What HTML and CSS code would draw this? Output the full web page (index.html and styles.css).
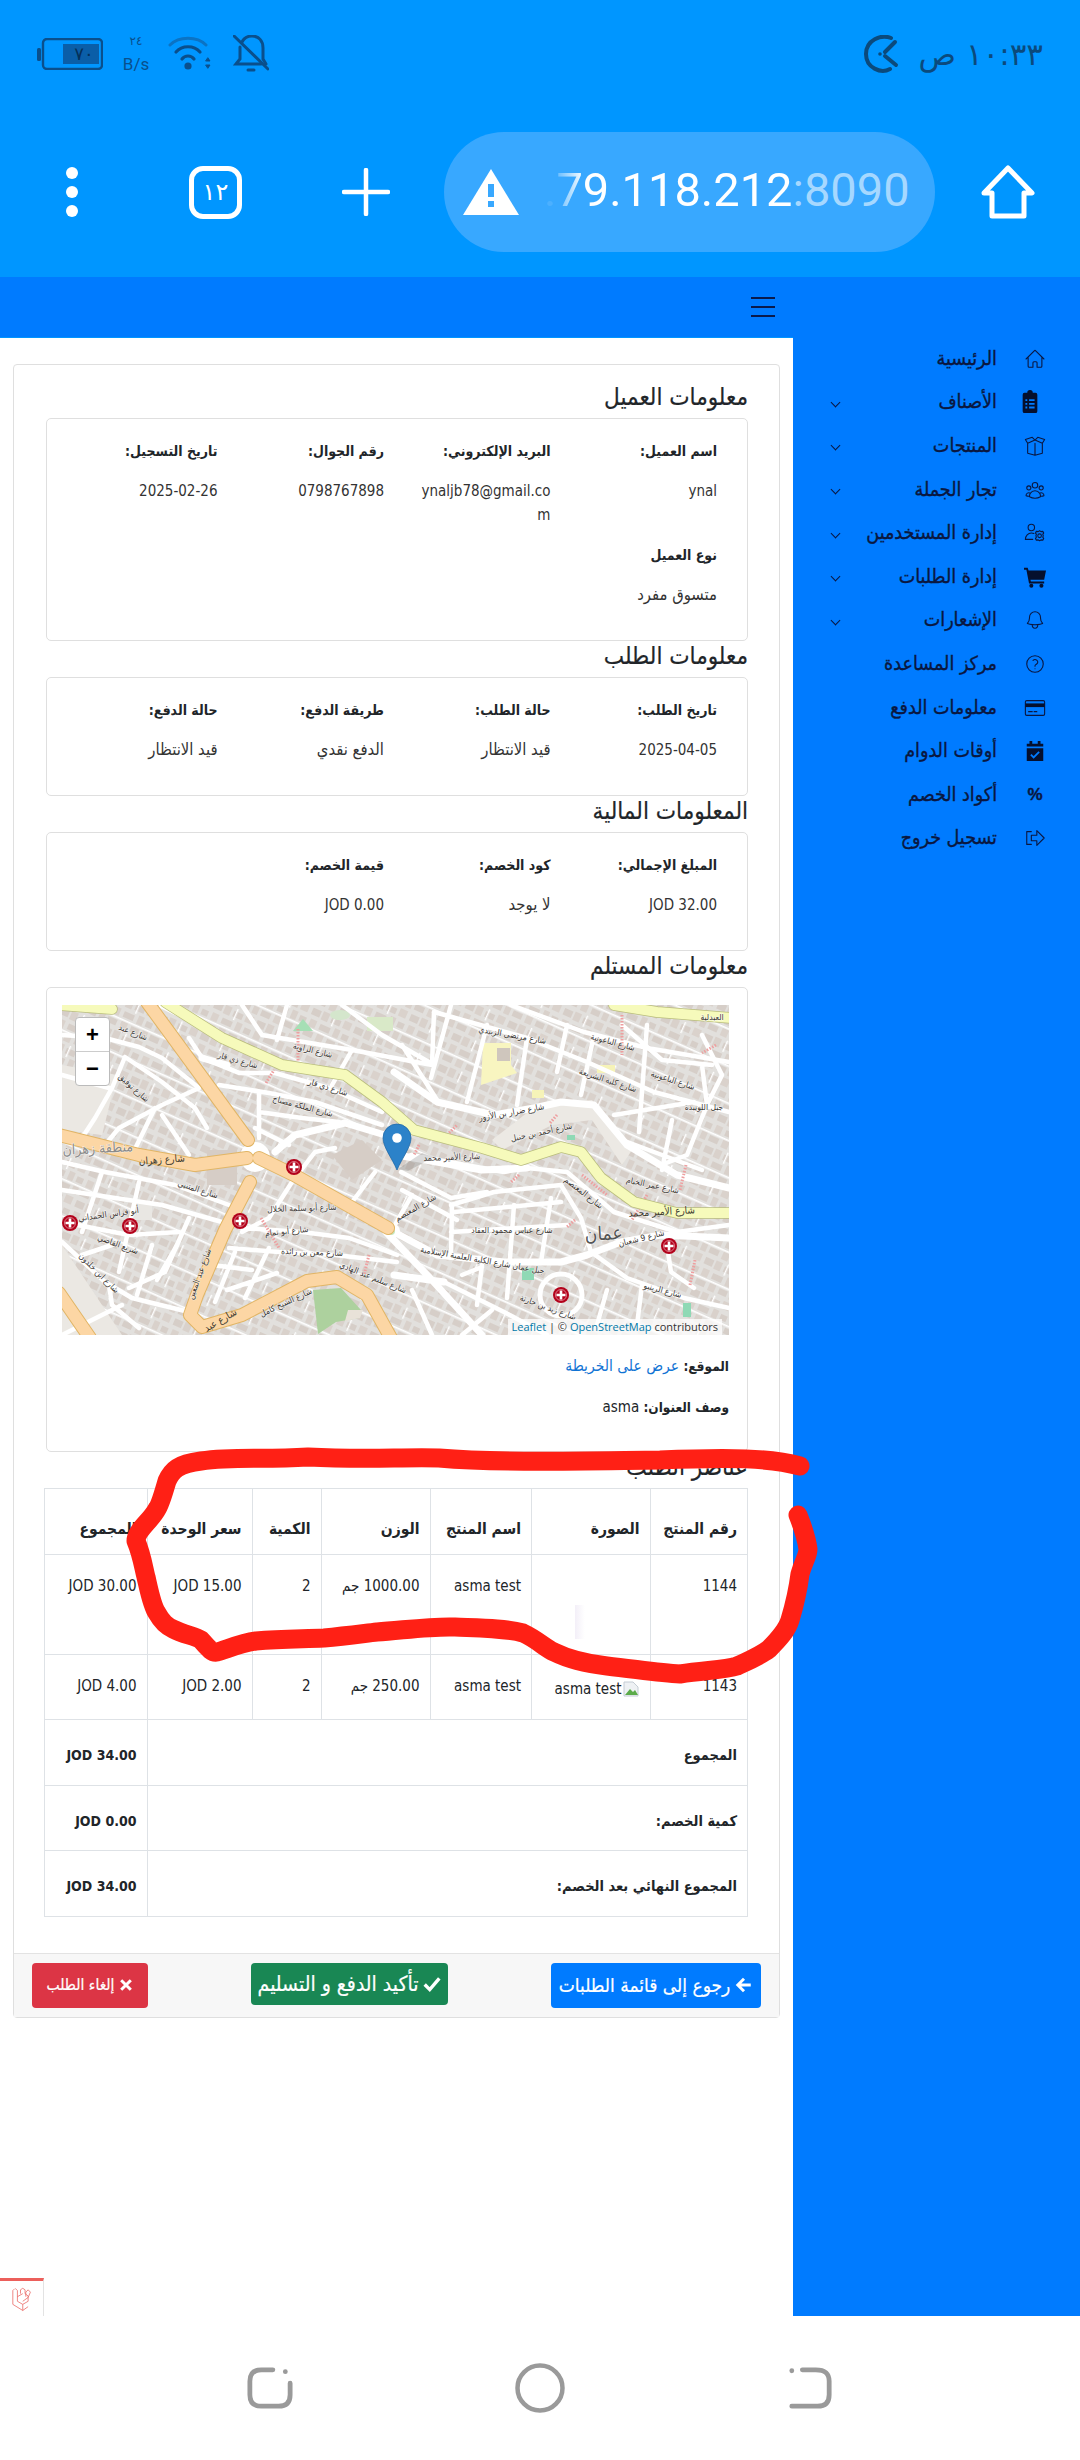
FILE: index.html
```html
<!DOCTYPE html>
<html lang="ar">
<head>
<meta charset="utf-8">
<title>تفاصيل الطلب</title>
<link rel="stylesheet" href="styles.css">
</head>
<body>
<div class="phone">
  <header class="chrome">
    <div class="status">
      <div class="status-left">
        <svg class="ic-battery" viewBox="0 0 66 32"><rect x="0" y="10" width="4" height="13" rx="1.5" fill="#0a4f8c"/><rect x="6" y="1" width="59" height="30" rx="4" fill="none" stroke="#0a4f8c" stroke-width="2.4"/><rect x="26" y="6" width="36" height="20" fill="#0a5ea8"/></svg>
        <span class="batt-num">٧٠</span>
        <div class="speed"><span class="speed-num">٢٤</span><span class="speed-unit">B/s</span></div>
        <svg class="ic-wifi" viewBox="0 0 44 38" fill="none" stroke-linecap="round"><path d="M2 10C11 1 29 1 38 10" stroke="#0b73c4" stroke-width="3"/><path d="M8 17C14 10 26 10 32 17" stroke="#0a4f8c" stroke-width="3.2"/><path d="M14 24C17 20 23 20 26 24" stroke="#0a4f8c" stroke-width="3.2"/><circle cx="20" cy="31" r="3.6" fill="#0a4f8c"/><path d="M40 23l2 3h-4zM40 33l2-3h-4z" fill="#0a4f8c" stroke="#0a4f8c"/></svg>
        <svg class="ic-mute" viewBox="0 0 36 38" fill="none" stroke="#0a4f8c" stroke-width="3" stroke-linecap="round"><path d="M9 7C11 3 15 1 19 1c7 0 11 5 11 12v11l3 5M7 12v12l-4 5h25"/><path d="M1 1l34 33"/><path d="M15 35h6"/></svg>
      </div>
      <div class="status-right">
        <svg class="ic-clock" viewBox="0 0 36 38" fill="none" stroke="#0b4a7c" stroke-width="4" stroke-linecap="round"><path d="M28 3C18-1 3 5 3 19s15 20 24 15"/><path d="M32 7L22 17M22 21l11 9"/><circle cx="17" cy="19" r="1.8" fill="#0b4a7c" stroke="none"/></svg>
        <span class="clock-text" dir="rtl">١٠:٣٣ ص</span>
      </div>
    </div>
    <div class="toolbar">
      <div class="dots"><i></i><i></i><i></i></div>
      <div class="tabs">١٢</div>
      <svg class="ic-plus" viewBox="0 0 48 48" stroke="#fff" stroke-width="4.5" stroke-linecap="round"><path d="M24 2v44M2 24h44"/></svg>
      <div class="pill">
        <svg class="ic-warn" viewBox="0 0 56 46"><path d="M28 0L56 46H0z" fill="#fff"/><rect x="25" y="15" width="6" height="13" fill="#38a8ff"/><rect x="25" y="32" width="6" height="6" fill="#38a8ff"/></svg>
        <span class="url"><span class="url-host">.79.118.212</span><span class="url-port">:8090</span></span>
      </div>
      <svg class="ic-home" viewBox="0 0 54 54" fill="none" stroke="#fff" stroke-width="5" stroke-linejoin="round"><path d="M27 3L51 28H43V51H11V28H3z"/></svg>
    </div>
  </header>

  <nav class="navbar"><div class="burger"><i></i><i></i><i></i></div></nav>

  <main class="main" dir="rtl">
    <aside class="sidebar">
      <ul class="menu">
        <li class="menu-item"><svg class="mi" viewBox="0 0 24 24"><path class="o" d="M2.25 12l8.954-8.955c.44-.439 1.152-.439 1.591 0L21.75 12M4.5 9.75v10.125c0 .621.504 1.125 1.125 1.125H9.75v-4.875c0-.621.504-1.125 1.125-1.125h2.25c.621 0 1.125.504 1.125 1.125V21h4.125c.621 0 1.125-.504 1.125-1.125V9.75"/></svg><span class="ml">الرئيسية</span></li>
        <li class="menu-item"><svg class="mi mi-off" viewBox="0 0 24 24"><path class="s" d="M9 2a3 3 0 0 1 6 0h3a2 2 0 0 1 2 2v18a2 2 0 0 1-2 2H6a2 2 0 0 1-2-2V4a2 2 0 0 1 2-2z"/><path d="M7 9h2v2H7zM11 9h6v2h-6zM7 13h2v2H7zM11 13h6v2h-6zM7 17h2v2H7zM11 17h6v2h-6z" fill="#007bff"/></svg><span class="ml">الأصناف</span><span class="chev"></span></li>
        <li class="menu-item"><svg class="mi" viewBox="0 0 24 24"><path class="o" d="M4 9v11l8 2 8-2V9M12 9v13M4 9L1.5 5 9 2.5l3 3 3-3L22.500 5 20 9l-8-3.500zM1.500 5 4 9l8-3.500M22.500 5 20 9"/></svg><span class="ml">المنتجات</span><span class="chev"></span></li>
        <li class="menu-item"><svg class="mi" viewBox="0 0 24 24"><path class="o" d="M18 18.720a9.094 9.094 0 003.741-.479 3 3 0 00-4.682-2.720m.940 3.198l.001.031c0 .225-.012.447-.037.666A11.944 11.944 0 0112 21c-2.170 0-4.207-.576-5.963-1.584A6.062 6.062 0 016 18.719m12 0a5.971 5.971 0 00-.941-3.197m0 0A5.995 5.995 0 0012 12.750a5.995 5.995 0 00-5.058 2.772m0 0a3 3 0 00-4.681 2.720 8.986 8.986 0 003.740.477m.940-3.197a5.971 5.971 0 00-.940 3.197M15 6.750a3 3 0 11-6 0 3 3 0 016 0zm6 3a2.250 2.250 0 11-4.500 0 2.250 2.250 0 014.500 0zm-13.500 0a2.250 2.250 0 11-4.500 0 2.250 2.250 0 014.500 0z"/></svg><span class="ml">تجار الجملة</span><span class="chev"></span></li>
        <li class="menu-item"><svg class="mi" viewBox="0 0 24 24"><g class="o"><circle cx="8" cy="6" r="3.500"/><path d="M1.500 19c0-4 3-7 6.500-7 1 0 2 .2 2.800.6M1.500 19h8"/><circle cx="17" cy="15" r="2"/><path d="M17 9.500l1.500 1 2-.3 1 1.700-1 1.600.5 1.500-.5 1.500 1 1.600-1 1.700-2-.3-1.500 1-1.500-1-2 .3-1-1.700 1-1.600-.5-1.500.5-1.500-1-1.600 1-1.700 2 .3z"/></g></svg><span class="ml">إدارة المستخدمين</span><span class="chev"></span></li>
        <li class="menu-item"><svg class="mi" viewBox="0 0 24 24"><path class="s" d="M0 2h4l1 3h19l-2 10H7l.5 2H22v2H5.500L2.600 4H0z"/><circle class="s" cx="8" cy="21.500" r="2.200"/><circle class="s" cx="19" cy="21.500" r="2.200"/></svg><span class="ml">إدارة الطلبات</span><span class="chev"></span></li>
        <li class="menu-item"><svg class="mi" viewBox="0 0 24 24"><path class="o" d="M14.857 17.082a23.848 23.848 0 005.454-1.310A8.967 8.967 0 0118 9.750v-.700V9A6 6 0 006 9v.750a8.967 8.967 0 01-2.312 6.022c1.733.640 3.560 1.085 5.455 1.310m5.714 0a24.255 24.255 0 01-5.714 0m5.714 0a3 3 0 11-5.714 0"/></svg><span class="ml">الإشعارات</span><span class="chev"></span></li>
        <li class="menu-item"><svg class="mi" viewBox="0 0 24 24"><g class="o"><circle cx="12" cy="12" r="9"/><path d="M9.879 8.019c1.171-1.025 3.071-1.025 4.242 0 1.172 1.025 1.172 2.687 0 3.712-.203.179-.430.326-.670.442-.745.361-1.450.999-1.450 1.827v.500M12 17.250h.008"/></g></svg><span class="ml">مركز المساعدة</span></li>
        <li class="menu-item"><svg class="mi" viewBox="0 0 24 24"><rect class="o" x="1.500" y="4" width="21" height="16" rx="1.500"/><rect class="s" x="1.500" y="7" width="21" height="4"/><path class="o" d="M5 16h4M11 16h3"/></svg><span class="ml">معلومات الدفع</span></li>
        <li class="menu-item"><svg class="mi" viewBox="0 0 24 24"><path class="s" d="M6 1h3v3h6V1h3v3h3v3H3V4h3zM3 9h18v14H3z"/><path d="M7.500 16l3 3 6-6" fill="none" stroke="#007bff" stroke-width="2"/></svg><span class="ml">أوقات الدوام</span></li>
        <li class="menu-item"><span class="mi mi-text">%</span><span class="ml">أكواد الخصم</span></li>
        <li class="menu-item"><svg class="mi" viewBox="0 0 24 24"><path class="o" d="M8 5H3v14h5M8 9h6V4l8 8-8 8v-5H8z"/></svg><span class="ml">تسجيل خروج</span></li>
      </ul>
    </aside>

    <section class="content">
      <div class="card">
        <div class="card-body">
          <h5 class="title">معلومات العميل</h5>
          <div class="box">
            <div class="grid4">
              <div class="cell"><p class="lbl">اسم العميل:</p><p class="val">ynal</p></div>
              <div class="cell"><p class="lbl">البريد الإلكتروني:</p><p class="val">ynaljb78@gmail.com</p></div>
              <div class="cell"><p class="lbl">رقم الجوال:</p><p class="val">0798767898</p></div>
              <div class="cell"><p class="lbl">تاريخ التسجيل:</p><p class="val">2025-02-26</p></div>
              <div class="cell"><p class="lbl">نوع العميل</p><p class="val val-ar">متسوق مفرد</p></div>
            </div>
          </div>

          <h5 class="title">معلومات الطلب</h5>
          <div class="box">
            <div class="grid4">
              <div class="cell"><p class="lbl">تاريخ الطلب:</p><p class="val">2025-04-05</p></div>
              <div class="cell"><p class="lbl">حالة الطلب:</p><p class="val val-ar">قيد الانتظار</p></div>
              <div class="cell"><p class="lbl">طريقة الدفع:</p><p class="val val-ar">الدفع نقدي</p></div>
              <div class="cell"><p class="lbl">حالة الدفع:</p><p class="val val-ar">قيد الانتظار</p></div>
            </div>
          </div>

          <h5 class="title">المعلومات المالية</h5>
          <div class="box">
            <div class="grid4">
              <div class="cell"><p class="lbl">المبلغ الإجمالي:</p><p class="val">JOD 32.00</p></div>
              <div class="cell"><p class="lbl">كود الخصم:</p><p class="val val-ar">لا يوجد</p></div>
              <div class="cell"><p class="lbl">قيمة الخصم:</p><p class="val">JOD 0.00</p></div>
            </div>
          </div>

          <h5 class="title">معلومات المستلم</h5>
          <div class="box box-map">
            <div class="map" dir="ltr">
              <svg class="map-svg" viewBox="0 0 667 330">
                <defs>
                  <pattern id="blocks" width="46" height="34" patternUnits="userSpaceOnUse" patternTransform="rotate(24)">
                    <rect width="46" height="34" fill="#e2e0dd"/>
                    <rect x="1" y="2" width="9" height="7" fill="#d6cec8"/>
                    <rect x="12" y="1" width="7" height="9" fill="#d9d1cb"/>
                    <rect x="22" y="3" width="10" height="6" fill="#d6cec8"/>
                    <rect x="35" y="1" width="8" height="8" fill="#dad2cc"/>
                    <rect x="3" y="13" width="7" height="8" fill="#dad2cc"/>
                    <rect x="14" y="14" width="11" height="6" fill="#d6cec8"/>
                    <rect x="29" y="12" width="6" height="9" fill="#d9d1cb"/>
                    <rect x="38" y="14" width="7" height="6" fill="#d6cec8"/>
                    <rect x="1" y="25" width="10" height="6" fill="#d6cec8"/>
                    <rect x="15" y="24" width="7" height="8" fill="#dad2cc"/>
                    <rect x="26" y="25" width="9" height="6" fill="#d6cec8"/>
                    <rect x="38" y="24" width="6" height="8" fill="#d9d1cb"/>
                    <rect x="0" y="22" width="46" height="1.600" fill="#fff"/>
                    <rect x="24" y="0" width="1.400" height="12" fill="#fff"/>
                  </pattern>
                  <filter id="soft"><feGaussianBlur stdDeviation="0.7"/></filter>
                  <g id="hosp"><circle r="8" fill="#b3021b"/><circle r="5.500" fill="#b3021b" stroke="#f3c8cc" stroke-width=".6"/><path d="M-4.500 0h9M0-4.500v9" stroke="#fff" stroke-width="2.600"/></g>
                </defs>
                <g filter="url(#soft)">
                  <rect width="667" height="330" fill="url(#blocks)"/>
                  <path d="M0 60L55 70 40 130 0 125zM0 240L60 330H0z" fill="#ebe8e3"/>
                  <path d="M475 100L530 95 570 145 560 160 530 115 490 120 440 145 430 135z" fill="#ece9e4"/>
                  <path d="M270 150l30-15 20 20-30 20zM145 145h30v35h-30z" fill="#d6cdc6"/>
                  <rect x="72" y="197" width="18" height="18" fill="#e9e7e3"/>
                  <path d="M421 38h28v22l6 8-36 12z" fill="#f8f5c0"/><rect x="435" y="43" width="13" height="13" fill="#cfc6bd"/>
                  <path d="M535 60h18v8h-18zM470 85h12v8h-12z" fill="#f6f3b8"/>
                  <path d="M268 10a10 5 0 1 1 0 .1z" fill="#d4e6cc"/>
                  <path d="M305 12h26v14h-26z" fill="#d9e9c8"/>
                  <path d="M241 14l-10 12h20z" fill="#a6dfb5"/>
                  <path d="M460 223h12v6h-12z" fill="#cfc6bd"/>
                  <rect x="460" y="263" width="12" height="12" fill="#8fd9b5"/>
                  <rect x="621" y="298" width="8" height="14" fill="#8fd9b5"/>
                  <rect x="505" y="130" width="8" height="5" fill="#8fd9b5"/>
                  <g fill="none" stroke="#fff" stroke-linecap="round" stroke-linejoin="round" stroke-width="4.500">
                    <path d="M0 30L43 33 77 42 100 53 137 83M63 52L100 77 133 103 145 123M63 52L50 83 33 113 20 133M137 83L100 100 57 123 43 140M93 103L70 150M100 110L127 150M0 70L47 83"/>
                    <path d="M157 80L207 88 253 97 320 120M127 33L140 53 177 68 213 68 267 83 320 107M197 87V133M197 107L240 113 277 117M193 123L227 140"/>
                    <path d="M0 157L43 167 113 180 167 200M0 185L33 190 100 200 160 217M40 167L20 227M77 177L57 267M0 217L67 230 117 227M0 237L43 277 70 293 127 307M47 280L50 300 77 323M127 213L103 267 67 283"/>
                    <path d="M167 243L217 247 273 250 335 257M173 247L153 297M207 243L183 293M230 177L207 213 180 227M180 223L240 227 287 233 335 250M273 143L253 147 233 173M313 167L290 197M150 260L190 265M165 285L215 268M20 250L50 240M90 240L75 290M115 240L95 275"/>
                    <path d="M332 270L382 277 442 307 485 330M389 200L432 187 499 180 519 213 529 247 565 273 622 293 667 303M339 167L389 193 425 187M349 150L442 167 465 163 505 167 552 207 615 227 667 220"/>
                    <path d="M372 7L465 33 525 57 592 87 667 107M449 0L522 27 585 43 667 57M465 33L455 100M425 20L405 97M389 0L369 73M505 20L495 67M532 30L519 90M585 20L577 127M645 100L625 150 599 160M552 110L632 97"/>
                    <path d="M392 207L499 197M389 227L505 220M390 200L389 250M452 200L445 293M489 193L479 257M605 240L609 267 632 283M180 0L200 30 230 35 290 45 370 60 372 7M280 0L320 30 372 60M340 40L375 95M290 45L270 80"/>
                    <path d="M0 330L60 300M225 0L215 35M560 135L640 165M610 115L600 165M640 30L660 70 645 100 640 60M560 20L600 55 650 60M350 190L330 225M340 185L395 215M400 270L420 262M420 260L415 300M545 285L535 320M580 280L575 320M430 305L400 330M350 285L370 330"/>
                  </g>
                  <g fill="none" stroke="#fff" stroke-linecap="round" stroke-linejoin="round" stroke-width="7">
                    <path d="M213 147L233 130 283 118 323 130 337 145M332 67L375 97 432 110 472 103 499 97 532 100 565 140 615 170 667 183M332 227L375 250 442 257 499 257 525 250 559 237 599 230 667 233M324 227L368 273 420 330M332 270L382 277"/>
                    <path d="M140 53L165 60M100 0L130 15M335 150L420 165 465 163"/>
                  </g>
                  <circle cx="193" cy="152" r="15" fill="#fff"/>
                  <circle cx="499" cy="290" r="21" fill="none" stroke="#fff" stroke-width="5"/>
                  <circle cx="331" cy="226" r="7" fill="#fff"/>
                  <circle cx="329" cy="226" r="4" fill="#c6e8bf"/>
                  <path d="M251 285l28-2 20 22-2 8-23 4-18 12z" fill="#add19e"/>
                  <path d="M286 305h15l-3 8-15 3z" fill="#e8e2d8"/>
                  <g fill="none" stroke="#ee9fa0" stroke-width="3" stroke-dasharray="1.500 1.500">
                    <path d="M236 24V58M199 213L217 243M204 78L212 65M357 140L352 150M307 250L302 270M457 170L448 178M495 110L488 118M560 10V50M654 40L640 48M520 170L545 190M585 190L570 215M633 255L628 280M385 130L395 120M624 160L618 185M513 215L505 222"/>
                  </g>
                  <g fill="none" stroke-linecap="round" stroke-linejoin="round">
                    <g stroke="#e1b565" stroke-width="14">
                      <path d="M85 -3L186 135"/><path d="M-3 130L77 150 133 160 185 153"/><path d="M197 153L232 170 326 223"/><path d="M188 177L163 225 135 290 128 310 140 322 180 310 245 276 275 272 305 290 330 335"/><path d="M-3 288L28 333"/>
                    </g>
                    <g stroke="#fcd6a4" stroke-width="12">
                      <path d="M85 -3L186 135"/><path d="M-3 130L77 150 133 160 185 153"/><path d="M197 153L232 170 326 223"/><path d="M188 177L163 225 135 290 128 310 140 322 180 310 245 276 275 272 305 290 330 335"/><path d="M-3 288L28 333"/>
                    </g>
                    <g stroke="#b9bd7c" stroke-width="11.500">
                      <path d="M103 -3L160 33 220 60 283 70 320 97 352 125 420 143 459 155 499 142 519 147 539 173 572 197 615 208 670 208"/><path d="M-3 0L50 4"/><path d="M552 0L595 7 670 13"/>
                    </g>
                    <g stroke="#f6fabb" stroke-width="10">
                      <path d="M103 -3L160 33 220 60 283 70 320 97 352 125 420 143 459 155 499 142 519 147 539 173 572 197 615 208 670 208"/><path d="M-3 0L50 4"/><path d="M552 0L595 7 670 13"/>
                    </g>
                  </g>
                </g>
                <use href="#hosp" x="232" y="162"/>
                <use href="#hosp" x="178" y="216"/>
                <use href="#hosp" x="68" y="221"/>
                <use href="#hosp" x="8" y="218"/>
                <use href="#hosp" x="607" y="241"/>
                <use href="#hosp" x="499" y="290"/>
                <g class="map-labels">
                  <text class="ml-big" x="36" y="148" transform="rotate(-3 36 148)">منطقة زهران</text>
                  <text class="ml-road" x="100" y="158" transform="rotate(-4 100 158)">شارع زهران</text>
                  <text x="70" y="30" transform="rotate(22 70 30)">شارع عبد</text>
                  <text x="175" y="58" transform="rotate(16 175 58)">شارع ذي قار</text>
                  <text x="250" y="48" transform="rotate(14 250 48)">شارع الزاوية</text>
                  <text x="265" y="85" transform="rotate(17 265 85)">شارع ذي قار</text>
                  <text x="240" y="104" transform="rotate(15 240 104)">شارع الملكة مصباح</text>
                  <text x="70" y="85" transform="rotate(42 70 85)">شارع توفيق</text>
                  <text x="135" y="187" transform="rotate(18 135 187)">شارع المتنبي</text>
                  <text x="240" y="206" transform="rotate(-2 240 206)">شارع أبو سلمة الخلال</text>
                  <text x="225" y="229" transform="rotate(-6 225 229)">شارع أبو تمام</text>
                  <text x="250" y="250" transform="rotate(2 250 250)">شارع معن بن زائدة</text>
                  <text x="47" y="212" transform="rotate(-8 47 212)">أبو فراس الحمداني</text>
                  <text x="55" y="242" transform="rotate(20 55 242)">شريع القاضي</text>
                  <text x="35" y="270" transform="rotate(45 35 270)">شارع ابن خلدون</text>
                  <text class="ml-road" x="160" y="318" transform="rotate(-30 160 318)">شارع عبد</text>
                  <text x="140" y="270" transform="rotate(-70 140 270)">شارع عبد المعين</text>
                  <text x="225" y="300" transform="rotate(-25 225 300)">شارع الشيخ كامل</text>
                  <text x="310" y="275" transform="rotate(22 310 275)">شارع سليم عبد الهادي</text>
                  <text x="390" y="155" transform="rotate(-2 390 155)">شارع الأمير محمد</text>
                  <text x="450" y="33" transform="rotate(10 450 33)">شارع مرتضى الزبيدي</text>
                  <text x="450" y="110" transform="rotate(-10 450 110)">شارع ضرار بن الأزور</text>
                  <text x="480" y="130" transform="rotate(-12 480 130)">شارع أحمد بن حنبل</text>
                  <text x="550" y="40" transform="rotate(15 550 40)">شارع الباعونية</text>
                  <text x="545" y="78" transform="rotate(18 545 78)">شارع كلية الشريعة</text>
                  <text x="610" y="78" transform="rotate(18 610 78)">شارع الباعونية</text>
                  <text x="642" y="105">جبل اللويبدة</text>
                  <text x="650" y="15">العبدلية</text>
                  <text x="590" y="183" transform="rotate(12 590 183)">شارع عمر الخيام</text>
                  <text class="ml-road" x="600" y="210" transform="rotate(-3 600 210)">شارع الأمير محمد</text>
                  <text class="ml-big ml-city" x="542" y="235" transform="rotate(-3 542 235)">عمان</text>
                  <text x="580" y="236" transform="rotate(-14 580 236)">شارع 9 شعبان</text>
                  <text x="450" y="228">شارع عباس محمود العقاد</text>
                  <text x="420" y="258" transform="rotate(10 420 258)">جبل عمان شارع الكلية العلمية الإسلامية</text>
                  <text x="485" y="305" transform="rotate(20 485 305)">شارع زيد بن حارثة</text>
                  <text x="600" y="288" transform="rotate(15 600 288)">شارع الرينبو</text>
                  <text x="355" y="205" transform="rotate(-30 355 205)">شارع المعتصم</text>
                  <text x="520" y="190" transform="rotate(38 520 190)">شارع المعتصم</text>
                </g>
                <path d="M336 164L360 148 372 152 346 166z" fill="#000" opacity=".14"/>
                <path d="M335 165C330 153 321 142 321 133a14 14 0 0 1 28 0C349 142 340 153 335 165z" fill="#2c82c9" stroke="#1f6aa8" stroke-width=".8"/>
                <circle cx="335" cy="133" r="4.800" fill="#fff"/>
              </svg>
              <div class="zoomctl"><span class="zbtn">+</span><span class="zbtn">−</span></div>
              <div class="attrib"><span class="lnk">Leaflet</span> | © <span class="lnk">OpenStreetMap</span> contributors</div>
            </div>
            <p class="addr"><b>الموقع:</b> <span class="link">عرض على الخريطة</span></p>
            <p class="addr"><b>وصف العنوان:</b> asma</p>
          </div>

          <h5 class="title">عناصر الطلب</h5>
          <table class="items">
            <colgroup><col class="c1"><col class="c2"><col class="c3"><col class="c4"><col class="c5"><col class="c6"><col class="c7"></colgroup>
            <thead>
              <tr><th>رقم المنتج</th><th>الصورة</th><th>اسم المنتج</th><th>الوزن</th><th>الكمية</th><th>سعر الوحدة</th><th>المجموع</th></tr>
            </thead>
            <tbody>
              <tr class="row-a"><td>1144</td><td><div class="ghost"></div></td><td>asma test</td><td>1000.00 جم</td><td>2</td><td>JOD 15.00</td><td>JOD 30.00</td></tr>
              <tr class="row-b"><td>1143</td><td><div class="broken"><svg class="broken-ic" viewBox="0 0 16 16"><path d="M1 1h9l5 5v9H1z" fill="#eef1f4" stroke="#c4ccd4"/><path d="M2 14l5-6 3 3 2-2 3 5z" fill="#5cab4a"/></svg><span>asma test</span></div></td><td>asma test</td><td>250.00 جم</td><td>2</td><td>JOD 2.00</td><td>JOD 4.00</td></tr>
            </tbody>
            <tfoot>
              <tr><th colspan="6">المجموع</th><th class="num">JOD 34.00</th></tr>
              <tr><th colspan="6">كمية الخصم:</th><th class="num">JOD 0.00</th></tr>
              <tr><th colspan="6">المجموع النهائي بعد الخصم:</th><th class="num">JOD 34.00</th></tr>
            </tfoot>
          </table>
        </div>
        <div class="card-footer">
          <a class="btn btn-blue"><svg class="bi" viewBox="0 0 16 16" fill="none" stroke="#fff" stroke-width="2.600"><path d="M14 8H3M8 2.500L2.500 8 8 13.500"/></svg>رجوع إلى قائمة الطلبات</a>
          <a class="btn btn-green"><svg class="bi" viewBox="0 0 16 16" fill="none" stroke="#fff" stroke-width="3"><path d="M1.500 8.500l4.500 4.500 8.500-10"/></svg>تأكيد الدفع و التسليم</a>
          <a class="btn btn-red"><svg class="bi bi-s" viewBox="0 0 16 16" fill="none" stroke="#fff" stroke-width="3.400"><path d="M2.500 2.500l11 11M13.500 2.500l-11 11"/></svg>إلغاء الطلب</a>
        </div>
      </div>
      <div class="debug"><svg class="debug-ic" viewBox="0 0 26 34" fill="none" stroke="#e8625e" stroke-width="1"><path d="M4 3l3 3v14l7 4 7-4v-7l-4-3v-5l-3-2-3 2v5M3 4L1 6v18l13 8 7-5M14 24v8M7 14l7-4M14 20l7-5 3-7-3-3-3 3v6"/></svg></div>
    </section>
  </main>

  <footer class="softkeys">
    <svg class="sk" viewBox="0 0 48 46" fill="none" stroke="#9a9a9a" stroke-width="5" stroke-linecap="round"><path d="M27 4H15C7 4 3 8 3 16v14c0 8 4 12 12 12h18c8 0 12-4 12-12V18"/><circle cx="40" cy="6" r="2.500" fill="#9a9a9a" stroke="none"/></svg>
    <svg class="sk sk-o" viewBox="0 0 50 50"><circle cx="25" cy="25" r="22.500" fill="none" stroke="#9a9a9a" stroke-width="4.500"/></svg>
    <svg class="sk" viewBox="0 0 48 46" fill="none" stroke="#9a9a9a" stroke-width="5" stroke-linecap="round"><path d="M16 4H30C40 4 44 8 44 16v14c0 8-4 12-12 12H5"/><circle cx="5" cy="5" r="2.500" fill="#9a9a9a" stroke="none"/></svg>
  </footer>

  <svg class="scribble" viewBox="0 0 1080 2460" fill="none"><path d="M800 1466C770 1458 732 1457 660 1460C575 1461 497 1463 439 1458C400 1457 366 1460 308 1457C260 1460 235 1456 201 1461C178 1464 172 1470 167 1481C163 1495 160 1505 157 1509C150 1522 136 1530 136 1541C142 1555 144 1570 146 1577C149 1590 152 1606 157 1613C162 1622 166 1626 173 1629C185 1635 195 1636 201 1640C208 1648 212 1653 217 1652C230 1648 242 1643 256 1641C280 1639 300 1639 324 1638C345 1636 360 1634 377 1632C405 1630 432 1626 455 1627C480 1628 505 1628 523 1633C538 1640 545 1648 554 1652C570 1660 590 1664 607 1666C635 1669 660 1673 680 1674C705 1670 725 1670 737 1666C750 1660 760 1656 769 1649C780 1638 787 1630 790 1620C796 1600 798 1590 800 1574C804 1560 808 1556 808 1549C806 1535 802 1525 798 1515" stroke="#ff2015" stroke-width="19" stroke-linecap="round" stroke-linejoin="round"/></svg>
</div>
</body>
</html>
```

FILE: styles.css
```css
* { box-sizing: border-box; }
html, body { margin: 0; padding: 0; }
body { background: #fff; color: #212529; font-family: "Liberation Sans Narrow", "DejaVu Sans Condensed", "DejaVu Sans", sans-serif; font-size: 15px; line-height: 24px; }
.phone { position: relative; width: 1080px; height: 2460px; display: flex; flex-direction: column; overflow: hidden; }

.chrome { height: 277px; background: #0096ff; flex: none; }
.status { height: 110px; display: flex; justify-content: space-between; align-items: flex-start; padding: 35px 37px 0; }
.status-left { display: flex; align-items: center; position: relative; height: 38px; }
.ic-battery { width: 66px; height: 32px; margin-right: 18px; }
.batt-num { position: absolute; left: 30px; top: 7px; width: 34px; text-align: center; color: #04305a; font: 18px/24px "DejaVu Sans", sans-serif; }
.speed { width: 30px; display: flex; flex-direction: column; align-items: center; color: #0a4f8c; margin-right: 17px; }
.speed-num { font: 12px/14px "DejaVu Sans", sans-serif; }
.speed-unit { font: 17px/20px Roboto, sans-serif; margin-top: 6px; }
.ic-wifi { width: 44px; height: 38px; margin-right: 21px; }
.ic-mute { width: 36px; height: 38px; }
.status-right { display: flex; align-items: center; gap: 20px; }
.ic-clock { width: 36px; height: 38px; }
.clock-text { font: 31px/38px "DejaVu Sans", sans-serif; color: #0b4a7c; }

.toolbar { height: 120px; margin-top: 22px; display: flex; align-items: center; padding: 0 45px 0 66px; }
.dots { display: flex; flex-direction: column; gap: 7px; width: 123px; }
.dots i { display: block; width: 12px; height: 12px; border-radius: 50%; background: #fff; }
.tabs { width: 53px; height: 53px; border: 5px solid #fff; border-radius: 14px; color: #fff; font: 24px/42px "DejaVu Sans", sans-serif; text-align: center; margin-right: 100px; }
.ic-plus { width: 48px; height: 48px; margin-right: 54px; }
.pill { width: 491px; height: 120px; border-radius: 60px; background: #38a8ff; display: flex; align-items: center; padding-left: 19px; margin-right: 46px; flex: none; }
.ic-warn { width: 56px; height: 46px; margin-right: 25px; }
.url { font: 47px/60px Roboto, sans-serif; color: #fff; white-space: nowrap; margin-top: -4px; }
.url-host { -webkit-mask-image: linear-gradient(to right, rgba(0,0,0,.1) 8px, #000 40px); mask-image: linear-gradient(to right, rgba(0,0,0,.1) 8px, #000 40px); }
.url-port { color: #a6d8ff; }
.ic-home { width: 54px; height: 54px; }

.navbar { height: 60px; background: #007bff; flex: none; display: flex; justify-content: flex-end; align-items: center; padding-right: 305px; }
.burger { width: 24px; display: flex; flex-direction: column; gap: 7px; }
.burger i { display: block; height: 2px; background: #0a1a4c; }

.main { flex: 1; display: flex; min-height: 0; }
.sidebar { width: 287px; background: #007bff; flex: none; padding: 0 33px 0 37px; }
.menu { list-style: none; margin: 0; padding: 0; }
.menu-item { height: 43.6px; display: flex; align-items: center; color: #0a1740; font-size: 19.500px; -webkit-text-stroke: .35px #0a1740; }
.mi { width: 22px; height: 22px; flex: none; margin: 0 1px 0 27px; overflow: visible; }
.mi-off { transform: translateX(-5px); }
.mi-text { text-align: center; font: bold 17px/22px "Liberation Sans", sans-serif; }
.o { fill: none; stroke: #0a1740; stroke-width: 1.2; stroke-linecap: round; stroke-linejoin: round; }
.s { fill: #05102e; }
.ml { white-space: nowrap; }
.chev { margin-right: auto; width: 7px; height: 7px; border-right: 1.4px solid #0a1740; border-bottom: 1.4px solid #0a1740; transform: rotate(45deg); margin-left: 2px; -webkit-text-stroke: 0; }

.content { width: 793px; display: flex; flex-direction: column; padding: 26px 13px 0; background: #fff; border-top: 1px solid #0096ff; }
.card { border: 1px solid #dfdfdf; border-radius: 4px; flex: none; }
.card-body { padding: 17px 31px 36px 32px; }
.title { margin: 0 0 6px; font-size: 24px; line-height: 30px; font-weight: 400; color: #212529; -webkit-text-stroke: .2px #212529; }
.box { border: 1px solid #dfdfdf; border-radius: 5px; padding: 20px 30px 17px 16px; }
.grid4 { display: grid; grid-template-columns: repeat(4, 166.500px); }
.cell { padding: 0 0 0 27px; overflow-wrap: anywhere; }
.lbl { margin: 0 0 16px; font-weight: bold; font-size: 14px; color: #212529; }
.val { margin: 0 0 16px; color: #333; }
.val-ar { font-size: 16.500px; }

.box-map { padding: 17px 18px 15px 17px; }
.map { position: relative; width: 667px; height: 330px; margin-bottom: 19px; background: #ddd; }
.map-svg { display: block; width: 667px; height: 330px; }
.map-labels text { font-family: "DejaVu Sans Condensed", "DejaVu Sans", sans-serif; font-size: 8.500px; fill: #3c3834; text-anchor: middle; paint-order: stroke; stroke: rgba(255,255,255,.6); stroke-width: 1.200px; }
.map-labels .ml-big { font-size: 14px; fill: #8a8a8a; }
.map-labels .ml-road { font-size: 10px; fill: #3d3a30; stroke: none; }
.map-labels .ml-city { font-size: 19px; fill: #555; }
.zoomctl { position: absolute; left: 13px; top: 12px; width: 35px; border: 1px solid #bbb; border-radius: 4px; background: #fff; }
.zbtn { display: block; height: 33px; text-align: center; font: bold 22px/33px "Liberation Sans", sans-serif; color: #000; }
.zbtn + .zbtn { height: 34px; border-top: 1px solid #ccc; }
.attrib { position: absolute; right: 7px; bottom: 0; background: rgba(255,255,255,.75); font: 11px/16px "Open Sans", sans-serif; color: #333; padding: 0 4px; white-space: nowrap; }
.lnk { color: #0078a8; }
.addr { margin: 0 0 17px; font-size: 15px; }
.addr b { font-weight: bold; font-size: 13.500px; }
.link { color: #1173d4; font-size: 15.500px; }

.items { width: 703px; border-collapse: collapse; table-layout: fixed; }
.items th, .items td { border: 1px solid #dee2e6; padding: 0 10px; vertical-align: top; text-align: right; font-size: 15px; }
.items th { font-weight: bold; }
.items thead th { height: 65.500px; padding-top: 28px; font-size: 15.500px; }
.items tbody td { padding-top: 19px; }
.items .row-a td { height: 100.500px; }
.items .row-b td { height: 65px; }
.items tfoot th { height: 65.500px; padding-top: 23px; font-size: 14.500px; }
.items tfoot .num { font-size: 14px; }
.c1 { width: 97.500px; } .c2 { width: 118.500px; } .c3 { width: 101.500px; } .c4 { width: 109px; } .c5 { width: 69px; } .c6 { width: 105px; } .c7 { width: 102.500px; }
.ghost { width: 65px; height: 34px; margin: 31px 0 0; background: linear-gradient(to left, #fff 85%, #f3eff8); }
.broken { display: flex; align-items: center; white-space: nowrap; margin-top: 3px; }
.broken-ic { width: 18px; height: 16px; flex: none; }

.card-footer { display: flex; justify-content: space-between; align-items: flex-start; background: #f7f7f7; border-top: 1px solid #e3e3e3; height: 64px; padding: 9px 18px 0; }
.btn { display: flex; align-items: center; justify-content: center; gap: 5px; color: #fff; border-radius: 4px; -webkit-text-stroke: .2px #fff; white-space: nowrap; }
.bi { width: 18px; height: 18px; flex: none; }
.bi-s { width: 14px; height: 14px; }
.btn-blue { width: 210px; height: 45px; background: #007bff; font-size: 19px; }
.btn-green { width: 197px; height: 42px; background: #198754; font-size: 21px; }
.btn-red { width: 116px; height: 45px; background: #dc3545; font-size: 15.500px; }

.debug { margin-top: auto; align-self: flex-end; margin-left: -13px; width: 44px; height: 38px; border-top: 3px solid #ec5f5b; border-right: 1px solid #e3e3e3; display: flex; align-items: center; justify-content: center; }
.debug-ic { width: 24px; height: 26px; }

.softkeys { flex: none; height: 144px; display: flex; align-items: center; justify-content: center; gap: 222px; }
.sk { width: 46px; height: 46px; }
.sk-o { width: 50px; height: 50px; }

.scribble { position: absolute; left: 0; top: 0; width: 1080px; height: 2460px; pointer-events: none; }
```
